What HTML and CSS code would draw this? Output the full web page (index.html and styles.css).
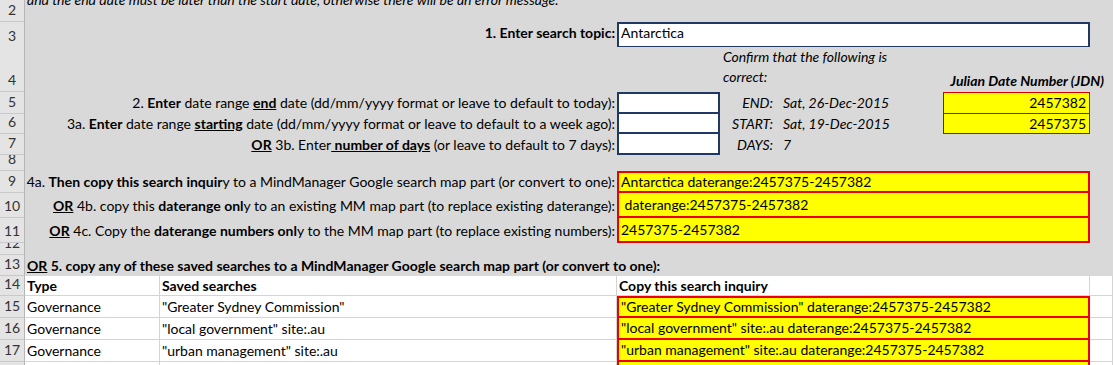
FILE: index.html
```html
<!DOCTYPE html>
<html>
<head>
<meta charset="utf-8">
<title>Search date range</title>
<link rel="stylesheet" href="styles.css">
</head>
<body>
<div class="sheet">
  <div class="row r2 gray">
    <div class="hdr">2</div>
    <div class="c all note"><span class="clipline">and the end date must be later than the start date, otherwise there will be an error message.</span></div>
  </div>
  <div class="row r3 gray">
    <div class="hdr">3</div>
    <div class="c ab right"><b>1. Enter search topic:</b></div>
    <div class="c cf navy first">Antarctica</div>
    <div class="c"></div>
  </div>
  <div class="row r4 gray">
    <div class="hdr">4</div>
    <div class="c ac"></div>
    <div class="c de confirm"><i>Confirm that the following is<br>correct:</i></div>
    <div class="c fg right jdnhead"><b><i>Julian Date Number (JDN)</i></b></div>
  </div>
  <div class="row r5 gray">
    <div class="hdr">5</div>
    <div class="c ab right">2.&nbsp;<b>Enter</b>&nbsp;date range&nbsp;<b><u>end</u></b>&nbsp;date (dd/mm/yyyy format or leave to default to today):</div>
    <div class="c navy first"></div>
    <div class="c right"><i>END:</i></div>
    <div class="c val"><i>Sat, 26-Dec-2015</i></div>
    <div class="c jdn first right">2457382</div>
    <div class="c"></div>
  </div>
  <div class="row r6 gray">
    <div class="hdr">6</div>
    <div class="c ab right">3a.&nbsp;<b>Enter</b>&nbsp;date range&nbsp;<b><u>starting</u></b>&nbsp;date (dd/mm/yyyy format or leave to default to a week ago):</div>
    <div class="c navy"></div>
    <div class="c right"><i>START:</i></div>
    <div class="c val"><i>Sat, 19-Dec-2015</i></div>
    <div class="c jdn right">2457375</div>
    <div class="c"></div>
  </div>
  <div class="row r7 gray">
    <div class="hdr">7</div>
    <div class="c ab right"><b><u>OR</u></b>&nbsp;3b. Enter<b><u>&nbsp;number of days</u></b>&nbsp;(or leave to default to 7 days):</div>
    <div class="c navy"></div>
    <div class="c right"><i>DAYS:</i></div>
    <div class="c val"><i>7</i></div>
    <div class="c"></div>
    <div class="c"></div>
  </div>
  <div class="row r8 gray">
    <div class="hdr">8</div>
  </div>
  <div class="row r9 gray">
    <div class="hdr">9</div>
    <div class="c ab right">4a.&nbsp;<b>Then copy this search inquir</b>y to a MindManager Google search map part (or convert to one):</div>
    <div class="c cf redbox first">Antarctica daterange:2457375-2457382</div>
    <div class="c"></div>
  </div>
  <div class="row r10 gray">
    <div class="hdr">10</div>
    <div class="c ab right"><b><u>OR</u></b>&nbsp;4b. copy this&nbsp;<b>daterange onl</b>y to an existing MM map part (to replace existing daterange):</div>
    <div class="c cf redbox">&nbsp;daterange:2457375-2457382</div>
    <div class="c"></div>
  </div>
  <div class="row r11 gray">
    <div class="hdr">11</div>
    <div class="c ab right"><b><u>OR</u></b>&nbsp;4c. Copy the&nbsp;<b>daterange numbers onl</b>y to the MM map part (to replace existing numbers):</div>
    <div class="c cf redbox">2457375-2457382</div>
    <div class="c"></div>
  </div>
  <div class="row r12 gray">
    <div class="hdr">12</div>
  </div>
  <div class="row r13 gray">
    <div class="hdr">13</div>
    <div class="c all"><b><u>OR</u>&nbsp;5. copy any of these saved searches to a MindManager Google search map part (or convert to one):</b></div>
  </div>
  <div class="row r14 white">
    <div class="hdr">14</div>
    <div class="c g"><b>Type</b></div>
    <div class="c g"><b>Saved searches</b></div>
    <div class="c g cf"><b>Copy this search inquiry</b></div>
    <div class="c g"></div>
  </div>
  <div class="row r15 white">
    <div class="hdr">15</div>
    <div class="c g">Governance</div>
    <div class="c g">"Greater Sydney Commission"</div>
    <div class="c cf redbox first">"Greater Sydney Commission" daterange:2457375-2457382</div>
    <div class="c g"></div>
  </div>
  <div class="row r16 white">
    <div class="hdr">16</div>
    <div class="c g">Governance</div>
    <div class="c g">"local government" site:.au</div>
    <div class="c cf redbox">"local government" site:.au daterange:2457375-2457382</div>
    <div class="c g"></div>
  </div>
  <div class="row r17 white">
    <div class="hdr">17</div>
    <div class="c g">Governance</div>
    <div class="c g">"urban management" site:.au</div>
    <div class="c cf redbox">"urban management" site:.au daterange:2457375-2457382</div>
    <div class="c g"></div>
  </div>
  <div class="row r18 white">
    <div class="hdr">18</div>
    <div class="c g"></div>
    <div class="c g"></div>
    <div class="c cf redbox"></div>
    <div class="c g"></div>
  </div>
</div>
</body>
</html>
```

FILE: styles.css
```css
* {
  box-sizing: border-box;
  margin: 0;
  padding: 0;
}

html, body {
  background: #ffffff;
}

body {
  width: 1113px;
  height: 365px;
  overflow: hidden;
  font-family: Lato, "Liberation Sans", sans-serif;
  font-size: 14px;
  color: #000;
}

.sheet {
  display: flex;
  flex-direction: column;
}

.row {
  display: grid;
  grid-template-columns: 25px 135px 457px 103px 55px 168px 147px 23px;
  overflow: hidden;
  flex: none;
}

.gray { background: #d9d9d9; }
.white { background: #ffffff; }

.r2 { height: 22px; }
.r3 { height: 25px; }
.r4 { height: 45px; }
.r5 { height: 22px; }
.r6 { height: 20px; }
.r7 { height: 21px; }
.r8 { height: 16px; }
.r9 { height: 22px; }
.r10 { height: 25px; }
.r11 { height: 25px; }
.r12 { height: 12px; }
.r13 { height: 21px; }
.r14 { height: 20px; }
.r15 { height: 22px; }
.r16 { height: 22px; }
.r17 { height: 22px; }
.r18 { height: 22px; }

.hdr {
  background: #e4e4e4;
  border-right: 1px solid #b5b5b5;
  border-bottom: 1px solid #c9c9c9;
  color: #333;
  display: flex;
  align-items: flex-end;
  justify-content: center;
  line-height: 18px;
  padding-bottom: 2px;
  overflow: hidden;
}

.c {
  display: flex;
  align-items: center;
  padding: 0 2px;
  line-height: 18px;
  white-space: nowrap;
  min-width: 0;
}

.r3 .c { padding-bottom: 4px; }

.right { justify-content: flex-end; }

.all { grid-column: 2 / 9; }
.ab { grid-column: 2 / 4; }
.ac { grid-column: 2 / 5; }
.cf { grid-column: 4 / 8; }
.de { grid-column: 5 / 7; }
.fg { grid-column: 7 / 9; }

.note {
  align-items: flex-start;
  overflow: hidden;
  font-style: italic;
}

.clipline {
  display: block;
  margin-top: -9px;
}

.confirm {
  align-items: flex-end;
  line-height: 20px;
  padding: 0 2px 5px 3px;
}

.jdnhead {
  align-items: flex-end;
  padding: 0 9px 2px 0;
}

.val { padding-left: 8px; }

.navy {
  border: 2px solid #1f3864;
  border-top: 0;
  background: #ffffff;
}
.navy.first { border-top: 2px solid #1f3864; }

.jdn {
  background: #ffff00;
  border: 1px solid #d40000;
  border-top: 0;
  padding-right: 3px;
}
.jdn.first { border-top: 1px solid #d40000; }

.redbox {
  background: #ffff00;
  border: 2px solid #ee0000;
  border-top: 0;
}
.redbox.first { border-top: 2px solid #ee0000; }

.g {
  border-right: 1px solid #d4d4d4;
  border-bottom: 1px solid #d4d4d4;
}
```
